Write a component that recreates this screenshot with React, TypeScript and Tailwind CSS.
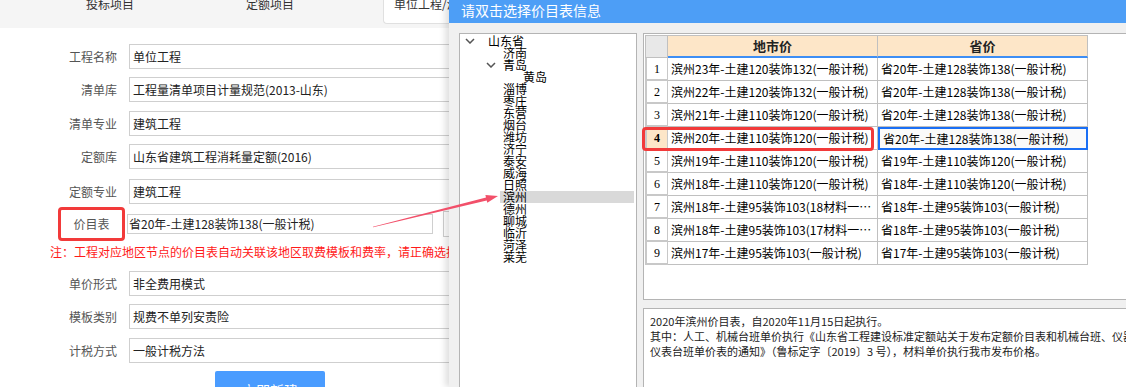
const FONT = "font-['Noto_Sans_CJK_SC',sans-serif]";

const tree: { text: string; level: number; open?: boolean; active?: boolean }[] = [
  { text: "山东省", level: 0, open: true },
  { text: "济南", level: 1 },
  { text: "青岛", level: 1, open: true },
  { text: "黄岛", level: 2 },
  { text: "淄博", level: 1 },
  { text: "枣庄", level: 1 },
  { text: "东营", level: 1 },
  { text: "烟台", level: 1 },
  { text: "潍坊", level: 1 },
  { text: "济宁", level: 1 },
  { text: "泰安", level: 1 },
  { text: "威海", level: 1 },
  { text: "日照", level: 1 },
  { text: "滨州", level: 1, active: true },
  { text: "德州", level: 1 },
  { text: "聊城", level: 1 },
  { text: "临沂", level: 1 },
  { text: "菏泽", level: 1 },
  { text: "莱芜", level: 1 },
];

const rows = [
  ["滨州23年-土建120装饰132(一般计税)", "省20年-土建128装饰138(一般计税)"],
  ["滨州22年-土建120装饰132(一般计税)", "省20年-土建128装饰138(一般计税)"],
  ["滨州21年-土建110装饰120(一般计税)", "省20年-土建128装饰138(一般计税)"],
  ["滨州20年-土建110装饰120(一般计税)", "省20年-土建128装饰138(一般计税)"],
  ["滨州19年-土建110装饰120(一般计税)", "省19年-土建110装饰120(一般计税)"],
  ["滨州18年-土建110装饰120(一般计税)", "省18年-土建110装饰120(一般计税)"],
  ["滨州18年-土建95装饰103(18材料一…", "省18年-土建95装饰103(一般计税)"],
  ["滨州18年-土建95装饰103(17材料一…", "省18年-土建95装饰103(一般计税)"],
  ["滨州17年-土建95装饰103(一般计税)", "省17年-土建95装饰103(一般计税)"],
];

function Field({ label, value, mt }: { label: string; value: string; mt: string }) {
  return (
    <div className={`flex items-center h-[25px] ${mt}`}>
      <div className="w-[117px] shrink-0 text-right text-[12px] leading-[14px] text-[#555]">{label}</div>
      <div className="ml-[12px] w-[340px] shrink-0 h-[25px] border border-[#cfcfcf] pl-[3px] flex items-center text-[12px] text-[#222] whitespace-nowrap">
        {value}
      </div>
    </div>
  );
}

function Chevron() {
  return (
    <svg width="10" height="6" viewBox="0 0 10 6" className="shrink-0">
      <polyline points="1,1 5,5 9,1" fill="none" stroke="#555" strokeWidth="1.5" />
    </svg>
  );
}

export default function App() {
  return (
    <div className={`relative w-[1126px] h-[387px] overflow-hidden bg-white flex ${FONT}`}>
      {/* left form page */}
      <div className="w-[449px] shrink-0 overflow-hidden">
        <div className="h-[28px] bg-[#f5f5f5] flex items-start pl-[30px] text-[12px] text-[#333] whitespace-nowrap">
          <div className="w-[160px] shrink-0 text-center leading-[12px] -mt-[2px]">投标项目</div>
          <div className="w-[160px] shrink-0 text-center leading-[12px] -mt-[2px]">定额项目</div>
          <div className="ml-[33px] w-[120px] shrink-0 h-[24px] bg-white border-l border-b border-[#e0e0e0] rounded-bl-[4px] pl-[10px]">
            <div className="leading-[12px] -mt-[2px]">单位工程/清单项目</div>
          </div>
        </div>

        <Field label="工程名称" value="单位工程" mt="mt-[16px]" />
        <Field label="清单库" value="工程量清单项目计量规范(2013-山东)" mt="mt-[8px]" />
        <Field label="清单专业" value="建筑工程" mt="mt-[9px]" />
        <Field label="定额库" value="山东省建筑工程消耗量定额(2016)" mt="mt-[8px]" />
        <Field label="定额专业" value="建筑工程" mt="mt-[10px]" />

        <div className="mt-[3px] h-[34px] flex items-center">
          <div className="ml-[58px] w-[67px] h-[34px] shrink-0 border-[3px] border-[#f23a3a] rounded-[4px] flex items-center justify-center text-[12px] text-[#555]">
            价目表
          </div>
          <div className="ml-[2px] w-[306px] shrink-0 h-[20px] border border-[#cfcfcf] pl-[1px] flex items-center text-[12px] text-[#222] whitespace-nowrap">
            省20年-土建128装饰138(一般计税)
          </div>
          <div className="ml-[10px] w-[30px] h-[26px] shrink-0 border border-[#cfcfcf]" />
        </div>

        <div className="mt-[4px] pl-[50px] text-[12px] leading-[14px] text-[#ff1a1a] whitespace-nowrap">
          注：工程对应地区节点的价目表自动关联该地区取费模板和费率，请正确选择
        </div>

        <Field label="单价形式" value="非全费用模式" mt="mt-[12px]" />
        <Field label="模板类别" value="规费不单列安责险" mt="mt-[8px]" />
        <Field label="计税方式" value="一般计税方法" mt="mt-[9px]" />

        <div className="mt-[8px] ml-[215px] w-[110px] h-[32px] bg-[#4a9cff] rounded-[2px] text-white text-[14px] leading-[16px] flex justify-center pt-[11px]">
          立即新建
        </div>
      </div>

      {/* dialog */}
      <div className="flex-1 flex flex-col bg-[#f0f0f0] shadow-[-4px_0_6px_rgba(0,0,0,0.12)]">
        <div className="h-[23px] shrink-0 bg-[#4d9ef6] pl-[12px] text-white text-[14px] leading-[20px]">
          请双击选择价目表信息
        </div>
        <div className="flex-1 flex pt-[10px] pl-[10px]">
          {/* tree */}
          <div className="w-[178px] shrink-0 bg-white border-l border-t border-r border-[#b4b4b4] pt-[1px] text-[12px] leading-[12px] text-black">
            {tree.map((n) => (
              <div key={n.text} className="h-[12px] flex items-center whitespace-nowrap">
                {n.level === 0 && (
                  <div className="flex items-center">
                    <div className="ml-[5px]"><Chevron /></div>
                    <span className="ml-[13px]">{n.text}</span>
                  </div>
                )}
                {n.level === 1 && n.open && (
                  <div className="flex items-center">
                    <div className="ml-[26px]"><Chevron /></div>
                    <span className="ml-[7px]">{n.text}</span>
                  </div>
                )}
                {n.level === 1 && !n.open && (
                  <div className={`ml-[40px] mr-[2px] flex-1 h-[12px] pl-[3px] ${n.active ? "bg-[#d9d9d9]" : ""}`}>
                    {n.text}
                  </div>
                )}
                {n.level === 2 && <span className="ml-[63px]">{n.text}</span>}
              </div>
            ))}
          </div>

          {/* right column */}
          <div className="ml-[6px] flex-1 flex flex-col">
            <div className="relative h-[267px] shrink-0 bg-white border-l border-t border-b border-[#b4b4b4] pt-[1px] pl-[1px]">
              <div className="flex h-[23px]">
                <div className="w-[23px] h-[23px] bg-[#e8e8e8] border border-[#c0c0c0]" />
                <div className="w-[210px] h-[23px] bg-[#fde6c8] border-t border-r border-[#c0c0c0] border-b-2 border-b-[#3d8ef5] flex items-center justify-center text-[13px] font-bold text-[#222]">
                  地市价
                </div>
                <div className="w-[210px] h-[23px] bg-[#fde6c8] border-t border-r border-[#c0c0c0] border-b-2 border-b-[#3d8ef5] flex items-center justify-center text-[13px] font-bold text-[#222]">
                  省价
                </div>
              </div>
              {rows.map((r, i) => (
                <div key={i} className="flex h-[23px] text-[12px] text-black">
                  <div
                    className={`w-[23px] h-[23px] border-l-2 border-r border-b-2 border-[#c8c8c8] flex items-center justify-center font-['Liberation_Serif',serif] text-[12px] ${
                      i === 3 ? "bg-[#fde6c8] font-bold" : "bg-white"
                    }`}
                  >
                    {i + 1}
                  </div>
                  <div className="w-[210px] h-[23px] border-r border-b border-[#c0c0c0] pl-[3px] flex items-center whitespace-nowrap overflow-hidden">
                    {r[0]}
                  </div>
                  <div
                    className={`w-[210px] h-[23px] pl-[3px] flex items-center whitespace-nowrap overflow-hidden ${
                      i === 3 ? "border-2 border-[#1a6ff5] bg-[#fafafa]" : "border-r border-b border-[#c0c0c0]"
                    }`}
                  >
                    {r[1]}
                  </div>
                </div>
              ))}
              <div className="absolute left-[-2px] top-[93px] w-[232px] h-[24px] border-[3px] border-[#f23a3a] rounded-[4px]" />
            </div>

            <div className="mt-[8px] flex-1 bg-white border-l border-t border-[#b4b4b4] pl-[6px] pt-[5px] text-[11px] leading-[15px] text-[#222] whitespace-nowrap overflow-hidden">
              <div>2020年滨州价目表，自2020年11月15日起执行。</div>
              <div>其中：人工、机械台班单价执行《山东省工程建设标准定额站关于发布定额价目表和机械台班、仪器</div>
              <div>仪表台班单价表的通知》（鲁标定字〔2019〕3 号），材料单价执行我市发布价格。</div>
            </div>
          </div>
        </div>
      </div>

      {/* annotation arrow */}
      <svg className="absolute left-0 top-0 pointer-events-none" width="1126" height="387" viewBox="0 0 1126 387">
        <polygon
          points="372.9,226.7 486.0,197.4 485.4,195.0 498,196 487.3,202.8 486.7,200.4 373.1,227.3"
          fill="#f2506a"
        />
      </svg>
    </div>
  );
}
